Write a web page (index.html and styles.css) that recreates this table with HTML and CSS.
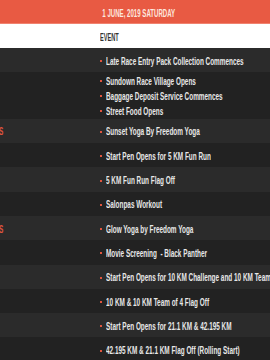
FILE: index.html
```html
<!DOCTYPE html>
<html>
<head>
<meta charset="utf-8">
<link rel="stylesheet" href="styles.css">
</head>
<body>
<div class="schedule">
  <div class="date-bar"><span class="txt mid">1 JUNE, 2019 SATURDAY</span></div>
  <div class="row head"><div class="time"></div><div class="event-h"><span class="txt">EVENT</span></div></div>
  <div class="row light"><div class="time"></div><ul class="events"><li><span class="txt">Late Race Entry Pack Collection Commences</span></li></ul></div>
  <div class="row dark multi"><div class="time"></div><ul class="events"><li><span class="txt">Sundown Race Village Opens</span></li><li><span class="txt">Baggage Deposit Service Commences</span></li><li><span class="txt">Street Food Opens</span></li></ul></div>
  <div class="row light"><div class="time"><span class="tag">S</span></div><ul class="events"><li><span class="txt">Sunset Yoga By Freedom Yoga</span></li></ul></div>
  <div class="row dark"><div class="time"></div><ul class="events"><li><span class="txt">Start Pen Opens for 5 KM Fun Run</span></li></ul></div>
  <div class="row light"><div class="time"></div><ul class="events"><li><span class="txt">5 KM Fun Run Flag Off</span></li></ul></div>
  <div class="row dark"><div class="time"></div><ul class="events"><li><span class="txt">Salonpas Workout</span></li></ul></div>
  <div class="row light"><div class="time"><span class="tag">S</span></div><ul class="events"><li><span class="txt">Glow Yoga by Freedom Yoga</span></li></ul></div>
  <div class="row dark"><div class="time"></div><ul class="events"><li><span class="txt">Movie Screening&nbsp; - Black Panther</span></li></ul></div>
  <div class="row light"><div class="time"></div><ul class="events"><li><span class="txt">Start Pen Opens for 10 KM Challenge and 10 KM Team of 4</span></li></ul></div>
  <div class="row dark"><div class="time"></div><ul class="events"><li><span class="txt">10 KM &amp; 10 KM Team of 4 Flag Off</span></li></ul></div>
  <div class="row light"><div class="time"></div><ul class="events"><li><span class="txt">Start Pen Opens for 21.1 KM &amp; 42.195 KM</span></li></ul></div>
  <div class="row dark"><div class="time"></div><ul class="events"><li><span class="txt">42.195 KM &amp; 21.1 KM Flag Off (Rolling Start)</span></li></ul></div>
</div>
</body>
</html>
```
FILE: styles.css
```css
html, body {
  margin: 0;
  padding: 0;
  background: #222222;
}
body {
  width: 270px;
  height: 360px;
  overflow: hidden;
  font-family: "Liberation Sans", Arial, sans-serif;
  font-size: 10px;
  font-weight: bold;
}
.schedule {
  display: flex;
  flex-direction: column;
}
.txt {
  display: inline-block;
  white-space: nowrap;
  transform: scaleX(0.64);
  transform-origin: left center;
}
.txt.mid {
  transform: scaleX(0.61);
  transform-origin: center center;
}
.date-bar {
  height: 21px;
  padding-top: 2px;
  line-height: 23px;
  background: #e85a43;
  border-bottom: 1px solid #f0826f;
  color: #fde6df;
  text-align: center;
  padding-left: 8px;
  white-space: nowrap;
}
.row {
  display: grid;
  grid-template-columns: 100px 1fr;
  align-items: center;
  min-height: 24.3px;
}
.row.head {
  background: #ffffff;
  min-height: 24px;
}
.event-h {
  color: #333333;
  line-height: 15px;
  padding-top: 3px;
}
.event-h .txt {
  transform: scaleX(0.56);
}
.row.light { background: #2b2b2b; }
.row.dark { background: #222222; }
.time {
  display: flex;
  align-items: center;
  overflow: hidden;
  line-height: 15px;
  padding-top: 2px;
}
.tag {
  display: inline-block;
  color: #e0553e;
  transform: scaleX(0.64);
  transform-origin: left center;
  margin-left: -1.5px;
}
.events {
  list-style: none;
  margin: 0;
  padding: 2px 0 0;
  overflow: hidden;
}
.events li {
  display: flex;
  align-items: center;
  line-height: 15px;
  color: #e8e8e8;
  white-space: nowrap;
}
.events li::before {
  content: "";
  width: 2px;
  height: 2px;
  background: #e0553e;
  margin-right: 4px;
  flex: none;
}
.multi .events {
  padding-top: 1.5px;
}
```
